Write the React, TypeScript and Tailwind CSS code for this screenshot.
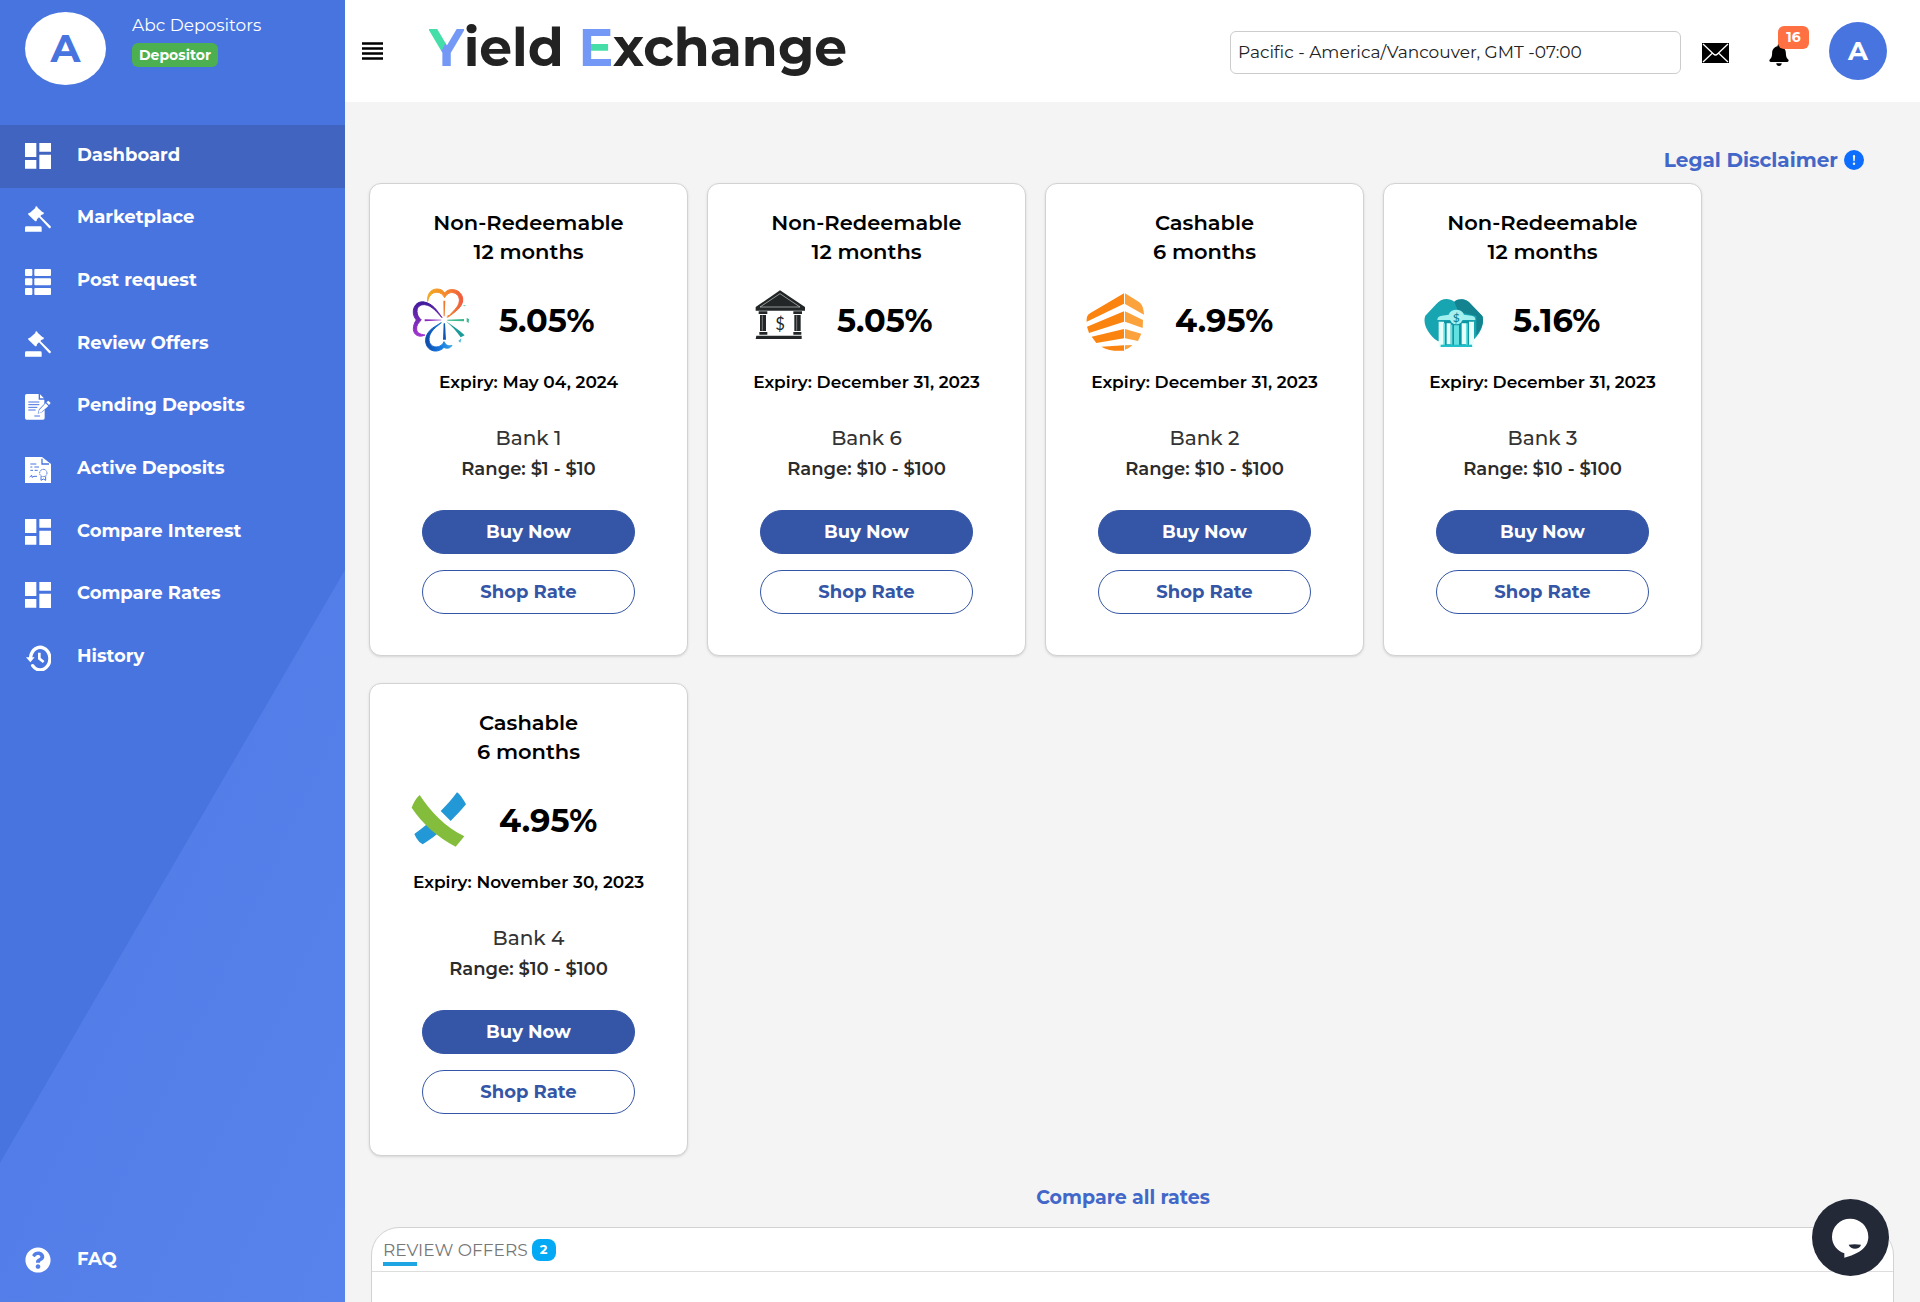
import type { ReactNode } from "react";
import { FaBell, FaQuestionCircle } from "react-icons/fa";
import { BsExclamationCircleFill } from "react-icons/bs";

const iconClass = "size-[26px] shrink-0";

function DashboardIcon() {
  return (
    <svg viewBox="0 0 78 78" className={iconClass} fill="currentColor" aria-hidden="true">
      <path d="M0 0h34v42H0zM43 0h35v26H43zM0 51h34v26H0zM43 35h35v43H43z" />
    </svg>
  );
}

function GavelIcon() {
  return (
    <svg viewBox="0 0 78 78" className={iconClass} fill="currentColor" aria-hidden="true">
      <path d="M31 2c2-2 4-2 6 0l1 3 14 13 3 1c2 2 2 4 0 6l-5 1-4 4 31 31c2 3-2 7-5 5L42 34l-6 6-1 4c-2 2-4 2-6 0L11 27c-2-2-2-4 0-6l4-1L31 6zM4 61h42q4 0 4 4v12H0V65q0-4 4-4z" />
    </svg>
  );
}

function ListIcon() {
  return (
    <svg viewBox="0 0 78 78" className={iconClass} fill="currentColor" aria-hidden="true">
      {[0, 28, 57].map((y) => (
        <g key={y}>
          <rect x="0" y={y} width="22" height="21" rx="3" />
          <rect x="28" y={y} width="50" height="21" rx="3" />
        </g>
      ))}
    </svg>
  );
}

function PendingIcon() {
  return (
    <svg viewBox="0 0 78 78" className={iconClass} aria-hidden="true">
      <path fill="#fff" d="M5 0h36v17h17v12L42 46l-4 13 13-4 8-7v24q0 5-5 5H5q-5 0-5-5V5q0-5 5-5zM45 1l12 12H45z" />
      <g stroke="#4874e0" strokeWidth="3">
        <path d="M10 24h33M10 32h33M10 40h27M10 48h22M28 66h17" />
      </g>
      <path fill="#fff" d="M62 28l8 8-21 19-9 3 3-10zM70 20l7 7-5 6-8-8z" />
    </svg>
  );
}

function ActiveIcon() {
  return (
    <svg viewBox="0 0 78 78" className={iconClass} aria-hidden="true">
      <path fill="#fff" d="M0 0h51l27 21v57H0z" />
      <g fill="none" stroke="#4874e0">
        <path strokeWidth="4" d="M51 5v16h21" />
        <path strokeWidth="3" d="M16 21h18M16 30h6M28 30h14M16 40h8M29 40h9" />
        <path strokeWidth="3" d="M14 60l6-5 1 6 6-3h9" />
        <path strokeWidth="3" strokeDasharray="5 2" d="M55 37a11 11 0 1 1-.1 0z" />
        <path strokeWidth="3" d="M48 58v12l7-4 7 4V58" />
      </g>
    </svg>
  );
}

function HistoryIcon() {
  return (
    <svg viewBox="0 0 78 78" className={iconClass} aria-hidden="true">
      <path fill="none" stroke="currentColor" strokeWidth="10" strokeLinecap="round" d="M17 36a29 34 0 1 1 6 26" />
      <path fill="currentColor" d="M3 37h26L16 52z" />
      <path fill="none" stroke="currentColor" strokeWidth="8" d="M43 23v18l13 10" />
    </svg>
  );
}

const navItems: { label: string; icon: ReactNode }[] = [
  { label: "Dashboard", icon: <DashboardIcon /> },
  { label: "Marketplace", icon: <GavelIcon /> },
  { label: "Post request", icon: <ListIcon /> },
  { label: "Review Offers", icon: <GavelIcon /> },
  { label: "Pending Deposits", icon: <PendingIcon /> },
  { label: "Active Deposits", icon: <ActiveIcon /> },
  { label: "Compare Interest", icon: <DashboardIcon /> },
  { label: "Compare Rates", icon: <DashboardIcon /> },
  { label: "History", icon: <HistoryIcon /> },
];

const logoClass = "h-[68px] w-16 shrink-0";

function CloverLogo() {
  return (
    <svg viewBox="147 348 192 204" className={logoClass} aria-hidden="true">
      <defs>
        <linearGradient id="clover-top" x1="0" x2="1">
          <stop offset="0" stopColor="#f2a81d" />
          <stop offset=".5" stopColor="#f58a2c" />
          <stop offset="1" stopColor="#f0593e" />
        </linearGradient>
        <linearGradient id="clover-left" x1="0" y1="0" x2="0" y2="1">
          <stop offset="0" stopColor="#3f1a9b" />
          <stop offset="1" stopColor="#a436cf" />
        </linearGradient>
        <linearGradient id="clover-bottom" x1="0" x2="1">
          <stop offset="0" stopColor="#0c4aa8" />
          <stop offset=".5" stopColor="#1273dc" />
          <stop offset="1" stopColor="#37a4e4" />
        </linearGradient>
      </defs>
      <path fill="url(#clover-top)" stroke="url(#clover-top)" strokeWidth="3" d="M203 394c-2-20 8-37 28-37 11 0 19 5 23 12 6-9 17-11 27-10 18 2 29 18 27 34-3 21-25 34-45 49 14-17 34-31 35-49 1-13-7-23-19-25-13-2-19 6-25 15-5-9-12-16-24-16-15 0-23 11-27 27z" />
      <path fill="url(#clover-left)" stroke="url(#clover-left)" strokeWidth="3" d="M246 443c-15-16-30-37-52-39-14-1-23 7-23 20 0 11 5 19 13 26-9 8-15 16-14 27 0 10 8 16 25 18-18 9-34 0-35-17 0-11 3-20 9-28-7-8-10-17-9-29 3-18 16-28 33-25 25 5 39 26 53 47z" />
      <path fill="url(#clover-bottom)" stroke="url(#clover-bottom)" strokeWidth="3" d="M244 458c-18 14-32 26-36 42-4 17 5 30 20 31 13 0 20-8 24-16 5 10 13 15 24 11-4 8-15 12-24 6-7 8-18 12-29 11-21-3-29-22-25-41 6-23 28-33 46-44z" />
      <path fill="#1b9b9a" d="M258 454c17 12 37 24 56 42l-12 6c-12-18-27-34-44-48z" />
      <path fill="#ef7b31" d="M250 392h6l-2 47h-3zM258 443l6-8 5 0z" />
      <path fill="#1456b5" d="M251 460h4l3 49h-9z" />
      <path fill="#8a2bbb" d="M194 448l50 1v2l-50 3z" />
      <path fill="#3cb98c" d="M262 449l50-2v7l-50-2zM320 444l7 3-1 12-6-4zM308 404l10 3-4 2z" />
      <path fill="#46b5dc" d="M295 513l9-8-3 13z" />
    </svg>
  );
}

function PillarBankLogo() {
  return (
    <svg viewBox="171 48 192 204" className={logoClass} aria-hidden="true">
      <path fill="#222627" d="M270 61l75 50v11H197v-11z" />
      <path fill="none" stroke="#d0d0d0" strokeWidth="2" d="M270 71l-60 40h120z" />
      <path fill="#222627" d="M206 124h26v8h-26zM210 135h18v48h-18zM208 186h24v8h-24zM310 124h26v8h-26zM313 135h19v48h-19zM310 186h24v8h-24zM199 197h136v10H197z" />
      <path stroke="#a8a8a8" strokeWidth="2" d="M217 136v46M320 136v46" />
      <text x="270" y="179" textAnchor="middle" fontSize="50" fill="#222627" fontFamily="Lato, sans-serif">$</text>
    </svg>
  );
}

function OrangeTowerLogo() {
  return (
    <svg viewBox="75 48 192 204" className={logoClass} aria-hidden="true">
      <path fill="#fb830f" d="M192 70v31L80 155c0-14 2-20 10-25zM192 124v31l-105 34-6-19zM192 177v28l-83 14-14-19zM192 226v16c-26 2-49-1-68-12z" />
      <path fill="#fca23d" d="M195 70l41 25c10 7 15 17 16 39l-57-32zM195 124l54 26-1 24-53-19zM195 177l49 14-10 22-39-8zM195 226l22-1c-6 7-12 10-22 14z" />
    </svg>
  );
}

function TealBankLogo() {
  return (
    <svg viewBox="99 48 192 204" className={logoClass} aria-hidden="true">
      <path fill="#17a5b1" d="M193 95c-18-14-41-9-54 7l-33 35c-9 22 7 56 38 77h101c26-20 40-55 32-76l-34-35c-13-17-35-20-50-8z" />
      <path fill="#138390" d="M193 95c15-12 37-9 50 8l34 35c6 15-1 38-18 59v-59L205 126z" />
      <path fill="#0f96a5" d="M151 152h98v78h-98z" />
      <path fill="#9ff0ee" d="M142 150c0-8 5-12 13-13l21-3c3-10 12-15 23-15s20 5 23 15l22 3c9 1 12 5 12 13z" />
      <path fill="#e6fffd" d="M146 155h16v75h-16zM170 160h12v63h-12zM215 160h13v63h-13zM237 155h15v75h-15z" />
      <path fill="#63e1e1" d="M160 160h5v65h-5zM182 164h5v60h-5zM192 166h15v60h-15zM228 160h5v65h-5z" />
      <path fill="#21bfc8" d="M152 224h94v7h-94z" />
      <circle cx="199" cy="143" r="20" fill="#a8f0ef" />
      <text x="199" y="156" textAnchor="middle" fontSize="36" fontWeight="600" fill="#128795" fontFamily="Lato, sans-serif">$</text>
    </svg>
  );
}

function CrossLogo() {
  return (
    <svg viewBox="147 78 192 204" className={logoClass} aria-hidden="true">
      <path fill="#2398d6" d="M291 97q5 2 13 13t14 23c-14 17-30 34-46 50l-30-30c18-17 34-36 49-56zM199 194l32 28c-14 12-29 22-43 31l-10-7q-10-11-15-24c12-9 24-18 36-28z" />
      <path fill="#84bd3c" d="M179 105c32 49 76 96 134 124-9 11-18 22-26 31-54-29-99-67-132-117 5-14 12-27 24-38z" />
    </svg>
  );
}

type Offer = { type: string; term: string; rate: string; expiry: string; bank: string; range: string; logo: ReactNode };

const offers: Offer[] = [
  { type: "Non-Redeemable", term: "12 months", rate: "5.05%", expiry: "May 04, 2024", bank: "Bank 1", range: "$1 - $10", logo: <CloverLogo /> },
  { type: "Non-Redeemable", term: "12 months", rate: "5.05%", expiry: "December 31, 2023", bank: "Bank 6", range: "$10 - $100", logo: <PillarBankLogo /> },
  { type: "Cashable", term: "6 months", rate: "4.95%", expiry: "December 31, 2023", bank: "Bank 2", range: "$10 - $100", logo: <OrangeTowerLogo /> },
  { type: "Non-Redeemable", term: "12 months", rate: "5.16%", expiry: "December 31, 2023", bank: "Bank 3", range: "$10 - $100", logo: <TealBankLogo /> },
  { type: "Cashable", term: "6 months", rate: "4.95%", expiry: "November 30, 2023", bank: "Bank 4", range: "$10 - $100", logo: <CrossLogo /> },
];

function OfferCard({ offer }: { offer: Offer }) {
  return (
    <article className="flex w-[319px] flex-col rounded-xl border border-[#d2d2d2] bg-white pt-6 pb-[41px] text-center shadow-sm">
      <h2 className="text-[21px] leading-[29px] font-semibold text-black">
        {offer.type}
        <br />
        {offer.term}
      </h2>
      <div className="mt-5 flex items-center gap-[26px] pl-[39px]">
        {offer.logo}
        <span className="pt-0.5 text-[32px] font-bold text-black">{offer.rate}</span>
      </div>
      <p className="mt-4 text-[17px] leading-6 font-semibold text-black">Expiry: {offer.expiry}</p>
      <p className="mt-7 text-[20px] leading-8 font-medium text-[#333]">{offer.bank}</p>
      <p className="text-[18px] leading-[30px] font-semibold text-[#2b2b2b]">Range: {offer.range}</p>
      <div className="mt-[26px] flex flex-col gap-4 px-[52px]">
        <button type="button" className="h-11 rounded-full border border-[#3556a6] bg-[#3556a6] text-[18px] font-bold text-white">
          Buy Now
        </button>
        <button type="button" className="h-11 rounded-full border border-[#3556a6] bg-white text-[18px] font-bold text-[#3556a6]">
          Shop Rate
        </button>
      </div>
    </article>
  );
}

function Sidebar() {
  return (
    <aside className="relative flex w-[345px] shrink-0 flex-col bg-[#4874e0] text-white">
      <div className="absolute inset-x-0 top-[570px] bottom-0 bg-linear-to-br from-[#4f7ae6] to-[#5883ec] [clip-path:polygon(100%_0,100%_100%,0_100%,0_81%)]" />
      <div className="relative flex h-[125px] items-start gap-[26px] pt-3 pl-[25px]">
        <div className="flex h-[73px] w-[81px] items-center justify-center rounded-[50%] bg-white text-[39px] font-bold text-[#4874e0]">A</div>
        <div className="flex flex-col items-start gap-1.5 pt-px">
          <span className="text-[17px] leading-6">Abc Depositors</span>
          <span className="rounded-md bg-[#4caf50] px-[7px] text-[14px] leading-6 font-bold">Depositor</span>
        </div>
      </div>
      <nav className="relative grid h-[564px] auto-rows-fr">
        {navItems.map((item, i) => (
          <a
            key={item.label}
            href="#"
            aria-current={i === 0 ? "page" : undefined}
            className={`flex items-center gap-[26px] pl-[25px] text-[18px] font-bold ${i === 0 ? "bg-[#4064c0]" : ""}`}
          >
            {item.icon}
            <span className="pb-0.5">{item.label}</span>
          </a>
        ))}
      </nav>
      <a href="#" className="relative mt-auto mb-3 flex h-[60px] items-center gap-[26px] pl-[25px] text-[18px] font-bold">
        <FaQuestionCircle className={iconClass} />
        <span className="pb-0.5">FAQ</span>
      </a>
    </aside>
  );
}

function Wordmark() {
  return (
    <h1 className="pb-1.5 text-[52px] leading-[60px] font-bold text-[#222]">
      <span className="bg-[linear-gradient(118deg,#45dea9_45%,#7398f6_45%)] bg-clip-text text-transparent">Y</span>
      ield{" "}
      <span className="bg-[#7398f6] bg-[linear-gradient(#45dea9,#45dea9)] bg-[length:64%_12px] bg-[position:100%_50%] bg-no-repeat bg-clip-text text-transparent">E</span>
      xchange
    </h1>
  );
}

function Header() {
  return (
    <header className="flex h-[102px] shrink-0 items-center bg-white pr-[33px] pl-[17px]">
      <button type="button" aria-label="Toggle menu" className="mr-[46px]">
        <svg viewBox="0 0 21 18" className="h-[18px] w-[21px]" aria-hidden="true">
          <path stroke="#000" strokeWidth="2.5" d="M0 1.5h21M0 6.5h21M0 11.5h21M0 16.5h21" />
        </svg>
      </button>
      <Wordmark />
      <div className="ml-auto flex items-center">
        <input
          type="text"
          aria-label="Time zone"
          defaultValue="Pacific - America/Vancouver, GMT -07:00"
          className="mt-0.5 h-[43px] w-[451px] rounded-md border border-[#ccc] bg-white px-[7px] text-[17px] text-[#222]"
        />
        <button type="button" aria-label="Messages" className="mt-1 ml-[21px]">
          <svg viewBox="0 0 27 20" className="h-5 w-[27px]" aria-hidden="true">
            <path d="M0 0h27v20H0z" />
            <path fill="none" stroke="#fff" strokeWidth="1.3" d="M1 1l10.500 10q2 2 4 0L26 1M1 19l9.500-9M26 19l-9.500-9" />
          </svg>
        </button>
        <button type="button" aria-label="Notifications" className="relative mt-2 ml-10">
          <FaBell className="h-[22px] w-5" />
          <span className="absolute -top-[18px] left-[9px] flex h-[23px] w-[31px] items-center justify-center rounded-md bg-[#ff7043] text-[14px] font-bold text-white">16</span>
        </button>
        <button type="button" className="ml-10 flex size-[58px] items-center justify-center rounded-full bg-[#4874e0] text-[26px] font-bold text-white">A</button>
      </div>
    </header>
  );
}

export default function App() {
  return (
    <div className="flex h-screen overflow-hidden bg-[#f4f4f4] font-[Montserrat,Inter,sans-serif]">
      <Sidebar />
      <div className="flex min-w-0 flex-1 flex-col">
        <Header />
        <main className="flex min-h-0 flex-1 flex-col overflow-hidden pr-[26px] pl-6">
          <div className="flex justify-end pt-11 pr-[30px]">
            <a href="#" className="flex items-center gap-1.5 text-[20px] leading-7 font-bold text-[#4267c8]">
              Legal Disclaimer
              <BsExclamationCircleFill className="size-5 text-[#0d6efd]" />
            </a>
          </div>
          <section aria-label="Offers" className="mt-[9px] flex flex-wrap gap-x-[19px] gap-y-[27px]">
            {offers.map((offer) => (
              <OfferCard key={offer.bank} offer={offer} />
            ))}
          </section>
          <a href="#" className="mt-7 mr-[17px] self-center text-[19px] leading-7 font-bold text-[#4267c8]">
            Compare all rates
          </a>
          <section className="mt-[15px] ml-0.5 h-80 shrink-0 rounded-t-[28px] border border-[#d2d2d2] bg-white">
            <div className="flex h-11 items-center gap-1 border-b border-[#ddd] pl-[11px] text-[17px] text-[#777]">
              <h2 className="relative leading-7">
                REVIEW OFFERS
                <span className="absolute -bottom-0.5 left-0 h-1 w-[34px] bg-[#1ea5e4]" />
              </h2>
              <span className="flex h-[22px] w-6 items-center justify-center rounded-lg bg-[#03a9f4] text-[13px] font-bold text-white">2</span>
            </div>
          </section>
        </main>
      </div>
      <button type="button" aria-label="Open chat" className="fixed right-[31px] bottom-[26px] size-[77px] rounded-full bg-[#242938]">
        <svg viewBox="0 0 231 231" className="size-full" aria-hidden="true">
          <path fill="#fff" d="M114 59a54 54 0 0 1 55 54c0 35-32 52-72 63v-13c-22-8-37-26-37-50a54 54 0 0 1 54-54z" />
          <path fill="#242938" d="M110 137q17-3 37 0c-3 15-31 17-37 0z" />
        </svg>
      </button>
    </div>
  );
}
